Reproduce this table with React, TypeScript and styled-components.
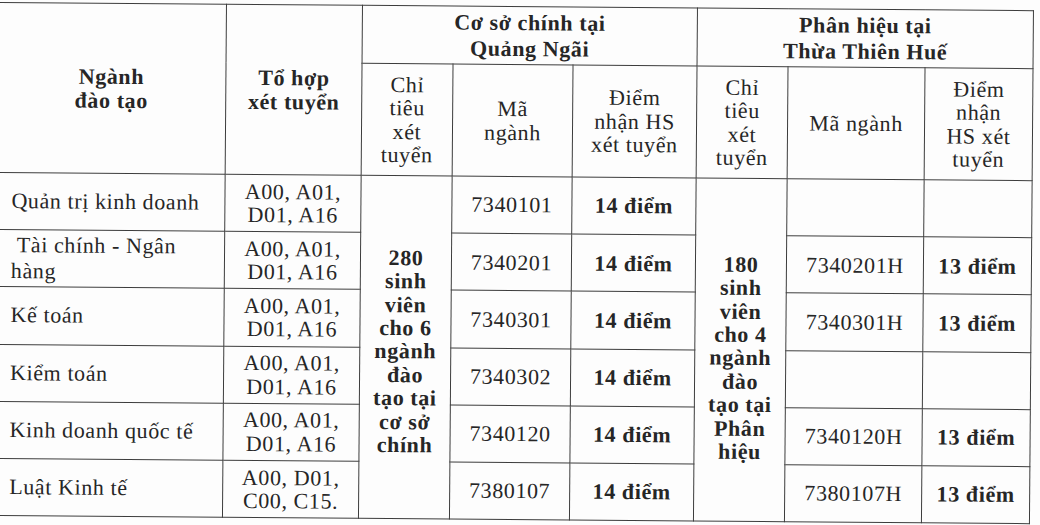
import React from 'react';
import styled, { createGlobalStyle } from 'styled-components';

const GlobalStyle = createGlobalStyle`
  html, body {
    margin: 0;
    padding: 0;
    background: #fdfdfd;
    overflow: hidden;
  }
`;

const Page = styled.div`
  width: 1040px;
  height: 525px;
  overflow: hidden;
  padding-top: 2px;
  box-sizing: border-box;
`;

const Sheet = styled.table`
  margin-left: -3px;
  width: 1036px;
  table-layout: fixed;
  border-collapse: collapse;
  transform: rotate(0.45deg);
  transform-origin: 0 0;
  font-family: 'Liberation Serif', 'Times New Roman', serif;
  font-size: 22px;
  letter-spacing: 0.6px;
  line-height: 23.4px;
  color: #262626;
`;

const HeadRow = styled.tr<{ $h: number }>`
  height: ${p => p.$h}px;
`;

const BodyRow = styled.tr`
  height: 57.2px;
`;

const Cell = styled.td<{ $bold?: boolean; $left?: boolean; $padTop?: number; $lh?: number }>`
  border: 1.5px solid #3d3d3d;
  padding: ${p => p.$padTop ?? 0}px 4px 0 ${p => (p.$left ? 15 : 4)}px;
  text-align: ${p => (p.$left ? 'left' : 'center')};
  vertical-align: middle;
  font-weight: ${p => (p.$bold ? 700 : 400)};
  line-height: ${p => (p.$lh ? `${p.$lh}px` : 'inherit')};
  white-space: nowrap;
  overflow: hidden;
`;

const HeadCell = styled(Cell).attrs({ as: 'th' })``;

const NameText = styled.span`
  white-space: pre;
`;

const widths = [229, 136, 91, 120, 124, 91, 137, 108];

const lines = (text: string) =>
  text.split('\n').map((t, i, arr) => (
    <React.Fragment key={i}>
      {t}
      {i < arr.length - 1 && <br />}
    </React.Fragment>
  ));

type Row = {
  name: string;
  combo: string;
  code: string;
  code2?: string;
};

const rows: Row[] = [
  { name: 'Quản trị kinh doanh', combo: 'A00, A01,\nD01, A16', code: '7340101' },
  { name: ' Tài chính - Ngân\nhàng', combo: 'A00, A01,\nD01, A16', code: '7340201', code2: '7340201H' },
  { name: 'Kế toán', combo: 'A00, A01,\nD01, A16', code: '7340301', code2: '7340301H' },
  { name: 'Kiểm toán', combo: 'A00, A01,\nD01, A16', code: '7340302' },
  { name: 'Kinh doanh quốc tế', combo: 'A00, A01,\nD01, A16', code: '7340120', code2: '7340120H' },
  { name: 'Luật Kinh tế', combo: 'A00, D01,\nC00, C15.', code: '7380107', code2: '7380107H' },
];

export default function App() {
  return (
    <Page>
      <GlobalStyle />
      <Sheet>
        <colgroup>
          {widths.map((w, i) => (
            <col key={i} style={{ width: w }} />
          ))}
        </colgroup>
        <thead>
          <HeadRow $h={58}>
            <HeadCell $bold rowSpan={2}>{lines('Ngành\nđào tạo')}</HeadCell>
            <HeadCell $bold rowSpan={2}>{lines('Tổ hợp\nxét tuyển')}</HeadCell>
            <HeadCell $bold colSpan={3} $lh={26}>{lines('Cơ sở chính tại\nQuảng Ngãi')}</HeadCell>
            <HeadCell $bold colSpan={3} $lh={26}>{lines('Phân hiệu tại\nThừa Thiên Huế')}</HeadCell>
          </HeadRow>
          <HeadRow $h={112}>
            <HeadCell>{lines('Chỉ\ntiêu\nxét\ntuyển')}</HeadCell>
            <HeadCell>{lines('Mã\nngành')}</HeadCell>
            <HeadCell>{lines('Điểm\nnhận HS\nxét tuyển')}</HeadCell>
            <HeadCell>{lines('Chỉ\ntiêu\nxét\ntuyển')}</HeadCell>
            <HeadCell>{lines('Mã ngành')}</HeadCell>
            <HeadCell>{lines('Điểm\nnhận\nHS xét\ntuyển')}</HeadCell>
          </HeadRow>
        </thead>
        <tbody>
          {rows.map((r, i) => (
            <BodyRow key={r.code}>
              <Cell $left $lh={26}>
                <NameText>{lines(r.name)}</NameText>
              </Cell>
              <Cell>{lines(r.combo)}</Cell>
              {i === 0 && (
                <Cell $bold rowSpan={6} $padTop={8}>
                  {lines('280\nsinh\nviên\ncho 6\nngành\nđào\ntạo tại\ncơ sở\nchính')}
                </Cell>
              )}
              <Cell>{r.code}</Cell>
              <Cell $bold>14 điểm</Cell>
              {i === 0 && (
                <Cell $bold rowSpan={6} $padTop={16}>
                  {lines('180\nsinh\nviên\ncho 4\nngành\nđào\ntạo tại\nPhân\nhiệu')}
                </Cell>
              )}
              <Cell>{r.code2 ?? ''}</Cell>
              <Cell $bold>{r.code2 ? '13 điểm' : ''}</Cell>
            </BodyRow>
          ))}
        </tbody>
      </Sheet>
    </Page>
  );
}
